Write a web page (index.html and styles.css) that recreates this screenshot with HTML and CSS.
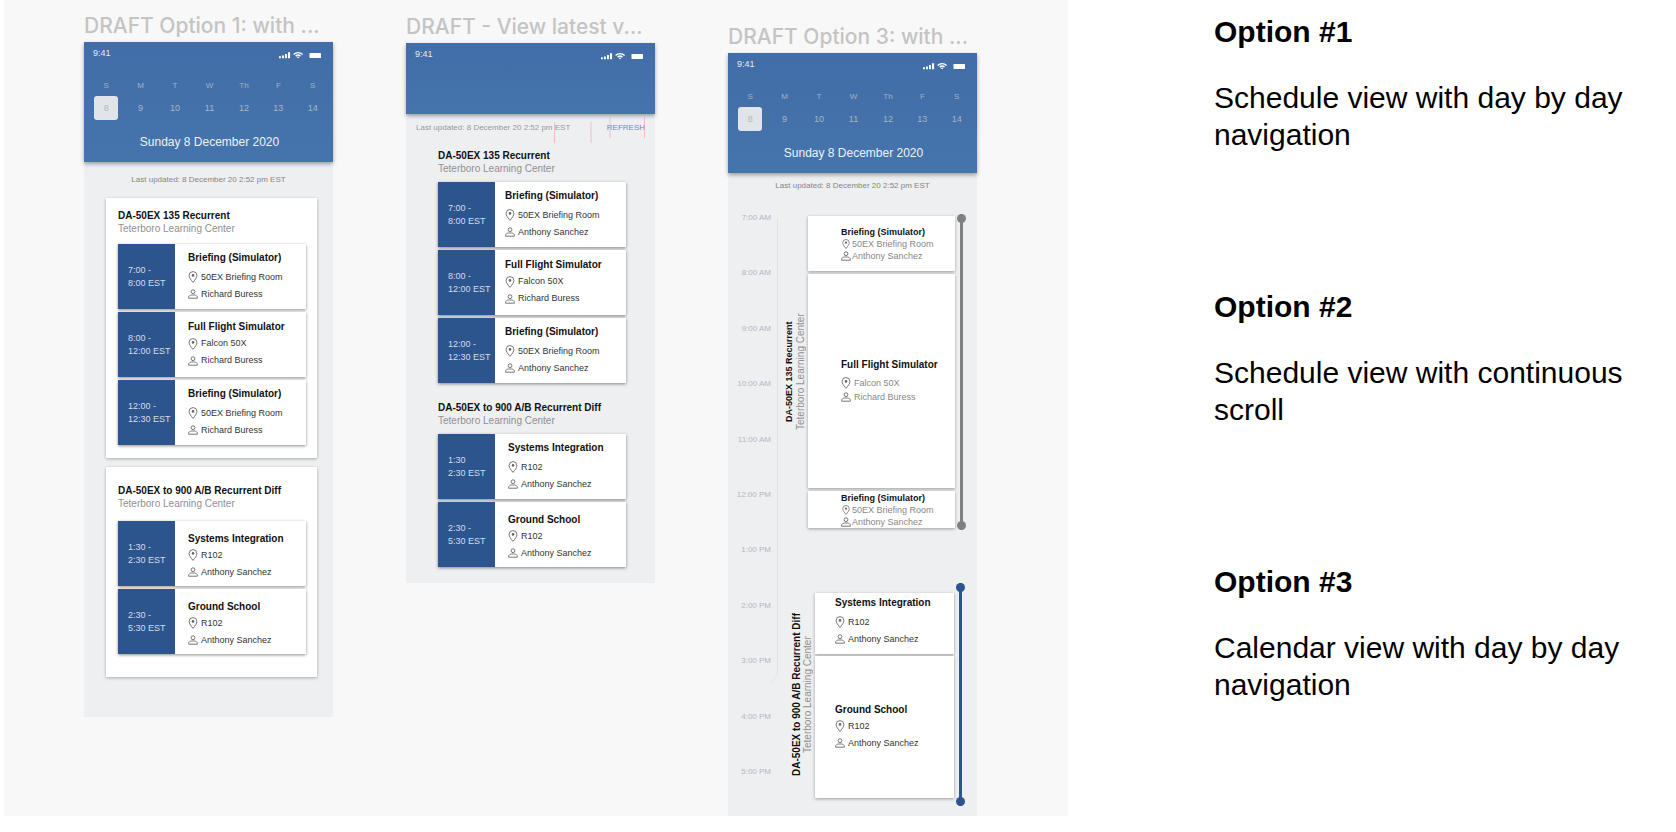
FILE: index.html
```html
<!DOCTYPE html>
<html lang="en">
<head>
    <meta charset="UTF-8">
    <meta name="viewport" content="width=device-width, initial-scale=1.0">

    <title>Schedule View Options</title>
    <link rel="stylesheet" href="styles.css">
</head>
<body>
    <svg class="sprite" aria-hidden="true">
        <symbol id="pin" viewBox="0 0 9 12">
            <path d="M4.5 11.4C2.4 8.8 0.6 6.6 0.6 4.5a3.9 3.9 0 0 1 7.8 0C8.4 6.6 6.6 8.8 4.5 11.4z" fill="none" stroke="currentColor" stroke-width="0.9"/>
            <circle cx="4.5" cy="4.4" r="1.3" fill="currentColor"/>
        </symbol>
        <symbol id="person" viewBox="0 0 10 10">
            <circle cx="5" cy="2.7" r="1.9" fill="none" stroke="currentColor" stroke-width="0.9"/>
            <path d="M0.6 9.2V8.4C0.6 6.9 2.2 6.2 3.4 6h3.2c1.2 0.2 2.8 0.9 2.8 2.4v0.8z" fill="none" stroke="currentColor" stroke-width="0.9"/>
        </symbol>
        <symbol id="status" viewBox="0 0 43 12">
            <path d="M0 9.2h1.9v2H0zM3 8.4h1.9v2.8H3zM6 7h1.9v4.2H6zM9 5.2h2.1v6H9z" fill="#fff"/>
            <path d="M14.6 7.4a6.6 6.6 0 0 1 9 0M16.7 9.1a3.7 3.7 0 0 1 4.8 0" fill="none" stroke="#fff" stroke-width="1.4"/>
            <path d="M17.8 10a2 2 0 0 1 2.6 0l-1.3 1.6z" fill="#fff"/>
            <rect x="30.5" y="6" width="11.5" height="5" rx="0.6" fill="#fff"/>
        </symbol>
    </svg>

    <main>
        <div class="board">
            <section class="draft">
                <h2>DRAFT Option 1: with ...</h2>
                <div class="phone phone-days">
                    <header>
                        <div class="status"><span>9:41</span><svg><use href="#status"/></svg></div>
                        <div class="week">
                            <span>S</span><span>M</span><span>T</span><span>W</span><span>Th</span><span>F</span><span>S</span>
                            <button class="active">8</button><button>9</button><button>10</button><button>11</button><button>12</button><button>13</button><button>14</button>
                        </div>
                        <p class="today">Sunday 8 December 2020</p>
                    </header>
                    <p class="updated">Last updated: 8 December 20 2:52 pm EST</p>
                    <div class="card">
                        <h3>DA-50EX 135 Recurrent</h3>
                        <p class="center-name">Teterboro Learning Center</p>
                        <div class="events">
                            <div class="event">
                                <div class="time">7:00 -<br>8:00 EST</div>
                                <div class="info">
                                    <h4>Briefing (Simulator)</h4>
                                    <p><svg><use href="#pin"/></svg>50EX Briefing Room</p>
                                    <p><svg><use href="#person"/></svg>Richard Buress</p>
                                </div>
                            </div>
                            <div class="event">
                                <div class="time">8:00 -<br>12:00 EST</div>
                                <div class="info tight">
                                    <h4>Full Flight Simulator</h4>
                                    <p><svg><use href="#pin"/></svg>Falcon 50X</p>
                                    <p><svg><use href="#person"/></svg>Richard Buress</p>
                                </div>
                            </div>
                            <div class="event">
                                <div class="time">12:00 -<br>12:30 EST</div>
                                <div class="info">
                                    <h4>Briefing (Simulator)</h4>
                                    <p><svg><use href="#pin"/></svg>50EX Briefing Room</p>
                                    <p><svg><use href="#person"/></svg>Richard Buress</p>
                                </div>
                            </div>
                        </div>
                    </div>
                    <div class="card card-tall">
                        <h3>DA-50EX to 900 A/B Recurrent Diff</h3>
                        <p class="center-name">Teterboro Learning Center</p>
                        <div class="events">
                            <div class="event">
                                <div class="time">1:30 -<br>2:30 EST</div>
                                <div class="info tight low">
                                    <h4>Systems Integration</h4>
                                    <p><svg><use href="#pin"/></svg>R102</p>
                                    <p><svg><use href="#person"/></svg>Anthony Sanchez</p>
                                </div>
                            </div>
                            <div class="event">
                                <div class="time">2:30 -<br>5:30 EST</div>
                                <div class="info tight low">
                                    <h4>Ground School</h4>
                                    <p><svg><use href="#pin"/></svg>R102</p>
                                    <p><svg><use href="#person"/></svg>Anthony Sanchez</p>
                                </div>
                            </div>
                        </div>
                    </div>
                </div>
            </section>

            <section class="draft draft-scroll">
                <h2>DRAFT - View latest v...</h2>
                <div class="phone phone-scroll">
                    <header>
                        <div class="status"><span>9:41</span><svg><use href="#status"/></svg></div>
                    </header>
                    <div class="refresh-row">
                        <p>Last updated: 8 December 20 2:52 pm EST</p>
                        <button>REFRESH</button>
                        <!-- spacing guides -->
                        <svg class="guides" viewBox="0 0 249 28"><path d="M148.5 6v21M185 6v21M204 1v21M238.5 1v21"/></svg>
                    </div>
                    <div class="group group-first">
                        <h3>DA-50EX 135 Recurrent</h3>
                        <p class="center-name">Teterboro Learning Center</p>
                        <div class="events">
                            <div class="event">
                                <div class="time">7:00 -<br>8:00 EST</div>
                                <div class="info">
                                    <h4>Briefing (Simulator)</h4>
                                    <p><svg><use href="#pin"/></svg>50EX Briefing Room</p>
                                    <p><svg><use href="#person"/></svg>Anthony Sanchez</p>
                                </div>
                            </div>
                            <div class="event">
                                <div class="time">8:00 -<br>12:00 EST</div>
                                <div class="info tight">
                                    <h4>Full Flight Simulator</h4>
                                    <p><svg><use href="#pin"/></svg>Falcon 50X</p>
                                    <p><svg><use href="#person"/></svg>Richard Buress</p>
                                </div>
                            </div>
                            <div class="event">
                                <div class="time">12:00 -<br>12:30 EST</div>
                                <div class="info">
                                    <h4>Briefing (Simulator)</h4>
                                    <p><svg><use href="#pin"/></svg>50EX Briefing Room</p>
                                    <p><svg><use href="#person"/></svg>Anthony Sanchez</p>
                                </div>
                            </div>
                        </div>
                    </div>
                    <div class="group">
                        <h3>DA-50EX to 900 A/B Recurrent Diff</h3>
                        <p class="center-name">Teterboro Learning Center</p>
                        <div class="events">
                            <div class="event">
                                <div class="time">1:30<br>2:30 EST</div>
                                <div class="info">
                                    <h4>Systems Integration</h4>
                                    <p><svg><use href="#pin"/></svg>R102</p>
                                    <p><svg><use href="#person"/></svg>Anthony Sanchez</p>
                                </div>
                            </div>
                            <div class="event">
                                <div class="time">2:30 -<br>5:30 EST</div>
                                <div class="info tight low">
                                    <h4>Ground School</h4>
                                    <p><svg><use href="#pin"/></svg>R102</p>
                                    <p><svg><use href="#person"/></svg>Anthony Sanchez</p>
                                </div>
                            </div>
                        </div>
                    </div>
                </div>
            </section>

            <section class="draft draft-calendar">
                <h2>DRAFT Option 3: with ...</h2>
                <div class="phone phone-calendar">
                    <header>
                        <div class="status"><span>9:41</span><svg><use href="#status"/></svg></div>
                        <div class="week">
                            <span>S</span><span>M</span><span>T</span><span>W</span><span>Th</span><span>F</span><span>S</span>
                            <button class="active">8</button><button>9</button><button>10</button><button>11</button><button>12</button><button>13</button><button>14</button>
                        </div>
                        <p class="today">Sunday 8 December 2020</p>
                    </header>
                    <p class="updated">Last updated: 8 December 20 2:52 pm EST</p>
                    <div class="calendar">
                        <ul class="hours">
                            <li>7:00 AM</li>
                            <li>8:00 AM</li>
                            <li>9:00 AM</li>
                            <li>10:00 AM</li>
                            <li>11:00 AM</li>
                            <li>12:00 PM</li>
                            <li>1:00 PM</li>
                            <li>2:00 PM</li>
                            <li>3:00 PM</li>
                            <li>4:00 PM</li>
                            <li>5:00 PM</li>
                        </ul>
                        <svg class="spine" viewBox="0 0 8 472"><path d="M6.5 6v456L0.5 471"/></svg>
                        <div class="courses">
                            <div class="course">
                                <div class="label">
                                    <h3 class="small">DA-50EX 135 Recurrent</h3>
                                    <p class="center-name">Teterboro Learning Center</p>
                                </div>
                                <div class="blocks">
                                    <div class="info dense hour">
                                        <h4>Briefing (Simulator)</h4>
                                        <p><svg><use href="#pin"/></svg>50EX Briefing Room</p>
                                        <p><svg><use href="#person"/></svg>Anthony Sanchez</p>
                                    </div>
                                    <div class="info roomy morning">
                                        <h4>Full Flight Simulator</h4>
                                        <p><svg><use href="#pin"/></svg>Falcon 50X</p>
                                        <p><svg><use href="#person"/></svg>Richard Buress</p>
                                    </div>
                                    <div class="info dense half-hour">
                                        <h4>Briefing (Simulator)</h4>
                                        <p><svg><use href="#pin"/></svg>50EX Briefing Room</p>
                                        <p><svg><use href="#person"/></svg>Anthony Sanchez</p>
                                    </div>
                                </div>
                                <div class="rail"></div>
                            </div>
                            <div class="course course-blue">
                                <div class="label">
                                    <h3>DA-50EX to 900 A/B Recurrent Diff</h3>
                                    <p class="center-name">Teterboro Learning Center</p>
                                </div>
                                <div class="blocks">
                                    <div class="info systems">
                                        <h4>Systems Integration</h4>
                                        <p><svg><use href="#pin"/></svg>R102</p>
                                        <p><svg><use href="#person"/></svg>Anthony Sanchez</p>
                                    </div>
                                    <div class="info tight ground">
                                        <h4>Ground School</h4>
                                        <p><svg><use href="#pin"/></svg>R102</p>
                                        <p><svg><use href="#person"/></svg>Anthony Sanchez</p>
                                    </div>
                                </div>
                                <div class="rail"></div>
                            </div>
                        </div>
                    </div>
                </div>
            </section>
        </div>

        <aside class="notes">
            <div class="note">
                <h1>Option #1</h1>
                <p>Schedule view with day by day navigation</p>
            </div>
            <div class="note">
                <h1>Option #2</h1>
                <p>Schedule view with continuous scroll</p>
            </div>
            <div class="note">
                <h1>Option #3</h1>
                <p>Calendar view with day by day navigation</p>
            </div>
        </aside>
    </main>
</body>
</html>
```
FILE: styles.css
```css
* {
    box-sizing: border-box;
}

body {
    font-family: "Liberation Sans", Arial, sans-serif;
    margin: 0;
    background: #fff;
    color: #111;
}

h1, h2, h3, h4, p, ul {
    margin: 0;
    padding: 0;
}

button {
    font-family: inherit;
    border: none;
    padding: 0;
    background: none;
    cursor: pointer;
}

.sprite {
    display: none;
}

main {
    display: grid;
    grid-template-columns: 7fr 4fr;
    align-items: start;
    padding-left: 4px;
}

.board {
    display: flex;
    align-items: flex-start;
    gap: 73px;
    padding: 12px 0 0 80px;
    background: #f8f8f8;
}

/* Phone frames */
.draft {
    flex: 0 0 249px;
}

.draft-scroll {
    margin-top: 1px;
}

.draft-calendar {
    margin-top: 11px;
}

.draft h2 {
    font-family: Inter, sans-serif;
    font-size: 21px;
    font-weight: 500;
    line-height: 28px;
    margin-bottom: 2px;
    color: #c4c4c4;
    white-space: nowrap;
}

.phone {
    background: #eeeff1;
}

.phone header {
    background: linear-gradient(#426da8, #4574ac);
    box-shadow: 0 2px 4px rgba(0, 0, 0, 0.35);
    padding: 5px 3px 12px 5px;
}

.phone-scroll header {
    padding-bottom: 54px;
}

.status {
    display: flex;
    justify-content: space-between;
    padding: 0 8px 0 4px;
    font-size: 9px;
    line-height: 12px;
    color: #e4eaf2;
}

.status svg {
    width: 43px;
    height: 12px;
}

.week {
    display: grid;
    grid-template-columns: repeat(7, 1fr);
    justify-items: center;
    row-gap: 4px;
    margin-top: 21px;
    font-size: 8px;
    line-height: 12px;
    color: #a3b0c2;
}

.week button {
    width: 24px;
    height: 24px;
    border-radius: 3px;
    font-size: 9px;
    color: #a9b4c2;
}

.week .active {
    background: #e1e5e9;
    color: #b3b6ba;
}

.today {
    margin-top: 14px;
    font-size: 12px;
    line-height: 16px;
    text-align: center;
    color: #eef2f7;
}

.updated {
    padding: 12px 0;
    font-size: 8px;
    line-height: 12px;
    text-align: center;
    color: #858585;
}

/* Schedule lists */
.phone-days {
    padding-bottom: 40px;
}

.card {
    margin: 0 16px 9px 22px;
    padding: 11px 11px 13px 12px;
    background: #fff;
    box-shadow: 0 1px 3px rgba(0, 0, 0, 0.3);
}

.card-tall {
    margin-bottom: 0;
    padding-top: 17px;
    padding-bottom: 23px;
}

h3 {
    font-size: 10px;
    line-height: 13px;
    white-space: nowrap;
}

.center-name {
    font-size: 10px;
    line-height: 13px;
    color: #909090;
    white-space: nowrap;
}

.events {
    display: flex;
    flex-direction: column;
    gap: 3px;
    margin-top: 9px;
}

.card-tall .events {
    margin-top: 11px;
}

.event {
    display: flex;
    min-height: 65px;
    background: #fff;
    box-shadow: 0 1px 3px rgba(0, 0, 0, 0.45);
}

.time {
    display: flex;
    align-items: center;
    flex: 0 0 57px;
    padding-left: 10px;
    background: #2c548d;
    font-size: 9px;
    line-height: 13px;
    color: #d5deea;
    white-space: nowrap;
}

.info {
    display: flex;
    flex-direction: column;
    justify-content: center;
    padding-top: 1px;
    padding-left: 13px;
}

.info h4 {
    margin-bottom: 5px;
    font-size: 10px;
    line-height: 12px;
    white-space: nowrap;
}

.info p {
    display: flex;
    align-items: center;
    gap: 3px;
    font-size: 9px;
    line-height: 17px;
    color: #333;
    white-space: nowrap;
}

.info svg {
    width: 10px;
    height: 12px;
    color: #666;
}

.tight h4 {
    margin-bottom: 2px;
}

.low {
    padding-top: 6px;
}

.phone-scroll {
    padding-bottom: 16px;
}

.refresh-row {
    position: relative;
    display: flex;
    justify-content: space-between;
    padding: 8px 10px 0;
    font-size: 8px;
    line-height: 12px;
    color: #999;
}

.refresh-row button {
    font-size: 8px;
    line-height: 12px;
    color: #6f88cb;
}

.guides {
    position: absolute;
    top: 2px;
    left: 0;
    width: 249px;
    height: 28px;
    fill: none;
    stroke: rgba(245, 150, 155, 0.55);
    pointer-events: none;
}

.group {
    margin-top: 18px;
    padding: 0 29px 0 32px;
}

.group-first {
    margin-top: 15px;
}

.group .events {
    margin-top: 7px;
}

.group-first .info {
    padding-left: 10px;
}

/* Calendar */
.phone-calendar .updated {
    padding: 7px 0 20px;
}

.calendar {
    display: flex;
    align-items: flex-start;
    padding-bottom: 10px;
}

.hours {
    display: flex;
    flex-direction: column;
    justify-content: space-between;
    flex: 0 0 43px;
    height: 566px;
    list-style: none;
    text-align: right;
    font-size: 8px;
    line-height: 12px;
    color: #b5b5c4;
}

.spine {
    width: 8px;
    height: 472px;
    fill: none;
    stroke: #e1e2e8;
}

.courses {
    flex: 1;
    padding: 2px 11px 0 0;
}

.course {
    display: flex;
    justify-content: flex-end;
    color: #808080;
}

.course-blue {
    margin-top: 53px;
    padding-right: 1px;
    color: #2c558f;
}

/* Rotated so the course name reads bottom to top */
.label {
    display: flex;
    flex-direction: column;
    align-items: center;
    margin-right: 2px;
    writing-mode: vertical-rl;
    transform: rotate(180deg);
}

.label h3,
.label .center-name {
    line-height: 11px;
}

.label h3 {
    color: #111;
}

.label .small {
    font-size: 9px;
}

.blocks {
    display: flex;
    flex-direction: column;
    gap: 3px;
    width: 147px;
    margin: 2px 2px 2px 0;
}

.course-blue .blocks {
    gap: 2px;
    width: 139px;
    margin: 10px 2px 8px 0;
}

.blocks .info {
    padding-left: 33px;
    background: #fff;
    box-shadow: 0 1px 3px rgba(0, 0, 0, 0.35);
}

.blocks h4 {
    color: #111;
}

.course-blue .info {
    padding-left: 20px;
}

.hour {
    height: 55px;
}

.morning {
    height: 214px;
}

.half-hour {
    height: 37px;
}

.course-blue .systems {
    height: 61px;
    padding-bottom: 4px;
}

.ground {
    height: 142px;
}

.dense h4 {
    margin-bottom: 0;
    font-size: 9px;
}

.dense p {
    gap: 1px;
    line-height: 12px;
    color: #888;
}

.dense svg {
    height: 10px;
}

.roomy p {
    line-height: 14px;
    color: #888;
}

.rail {
    position: relative;
    width: 9px;
    background: linear-gradient(currentColor, currentColor) center / 3px 100% no-repeat;
}

.rail::before,
.rail::after {
    content: "";
    position: absolute;
    left: 0;
    width: 9px;
    height: 9px;
    border-radius: 50%;
    background: currentColor;
}

.rail::before {
    top: 0;
}

.rail::after {
    bottom: 0;
}

/* Notes */
.notes {
    display: flex;
    flex-direction: column;
    gap: 135px;
    padding: 13px 48px 0 146px;
    font-size: 30px;
    line-height: 37px;
    color: #000;
}

.notes h1 {
    margin-bottom: 29px;
    font-size: 30px;
    line-height: 37px;
}
```
